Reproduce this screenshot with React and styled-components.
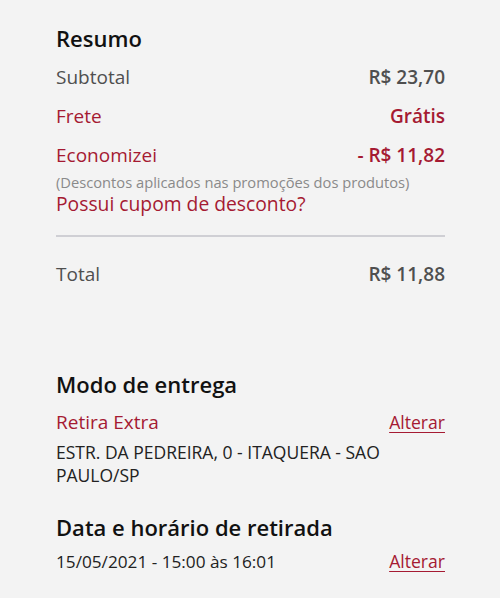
import React from 'react';
import styled, { createGlobalStyle } from 'styled-components';

const GlobalStyle = createGlobalStyle`
  body {
    margin: 0;
    background: #f3f3f3;
    font-family: "Open Sans", "Noto Sans", sans-serif;
  }
`;

const RED = '#a51a32';

const Page = styled.div`
  padding: 23px 55px 0 56px;
  width: 500px;
  box-sizing: border-box;
`;

const Heading = styled.h2`
  margin: 0 0 ${(p) => p.mb || 0}px;
  font-size: 22px;
  font-weight: 600;
  line-height: 30px;
  color: #111;
`;

const Row = styled.div`
  display: flex;
  justify-content: space-between;
  align-items: center;
  height: ${(p) => p.h || 39}px;
  font-size: 19px;
  color: ${(p) => (p.red ? RED : '#4f4f4f')};
`;

const Value = styled.span`
  font-weight: 600;
  color: ${(p) => (p.red ? RED : '#4f4f4f')};
`;

const Note = styled.div`
  font-size: 14.7px;
  line-height: 17px;
  color: #8a8a8a;
`;

const Coupon = styled.div`
  margin-top: 1px;
  font-size: 19.3px;
  line-height: 24px;
  color: ${RED};
`;

const Divider = styled.hr`
  margin: 19px 0 17px;
  border: 0;
  height: 2px;
  background: #cfcfd4;
`;

const Section = styled.section`
  margin-top: ${(p) => p.mt || 0}px;
`;

const Method = styled.span`
  color: ${RED};
`;

const Link = styled.a`
  color: ${RED};
  font-size: 17.6px;
  text-decoration: underline;
  text-underline-offset: 3px;
  text-decoration-thickness: 1px;
  cursor: pointer;
`;

const Address = styled.div`
  margin-top: 4px;
  font-size: 17.5px;
  line-height: 23px;
  color: #222;
`;

const DateText = styled.span`
  font-size: 17.2px;
  color: #222;
`;

export default function App() {
  return (
    <>
      <GlobalStyle />
      <Page>
        <Heading mb={4}>Resumo</Heading>
        <Row>
          <span>Subtotal</span>
          <Value>R$ 23,70</Value>
        </Row>
        <Row red>
          <span>Frete</span>
          <Value red>Grátis</Value>
        </Row>
        <Row red>
          <span>Economizei</span>
          <Value red>- R$ 11,82</Value>
        </Row>
        <Note>(Descontos aplicados nas promoções dos produtos)</Note>
        <Coupon>Possui cupom de desconto?</Coupon>
        <Divider />
        <Row>
          <span>Total</span>
          <Value>R$ 11,88</Value>
        </Row>

        <Section mt={76}>
          <Heading mb={8}>Modo de entrega</Heading>
          <Row h={30}>
            <Method>Retira Extra</Method>
            <Link>Alterar</Link>
          </Row>
          <Address>
            ESTR. DA PEDREIRA, 0 - ITAQUERA - SAO
            <br />
            PAULO/SP
          </Address>
        </Section>

        <Section mt={25}>
          <Heading>Data e horário de retirada</Heading>
          <Row h={38}>
            <DateText>15/05/2021 - 15:00 às 16:01</DateText>
            <Link>Alterar</Link>
          </Row>
        </Section>
      </Page>
    </>
  );
}
